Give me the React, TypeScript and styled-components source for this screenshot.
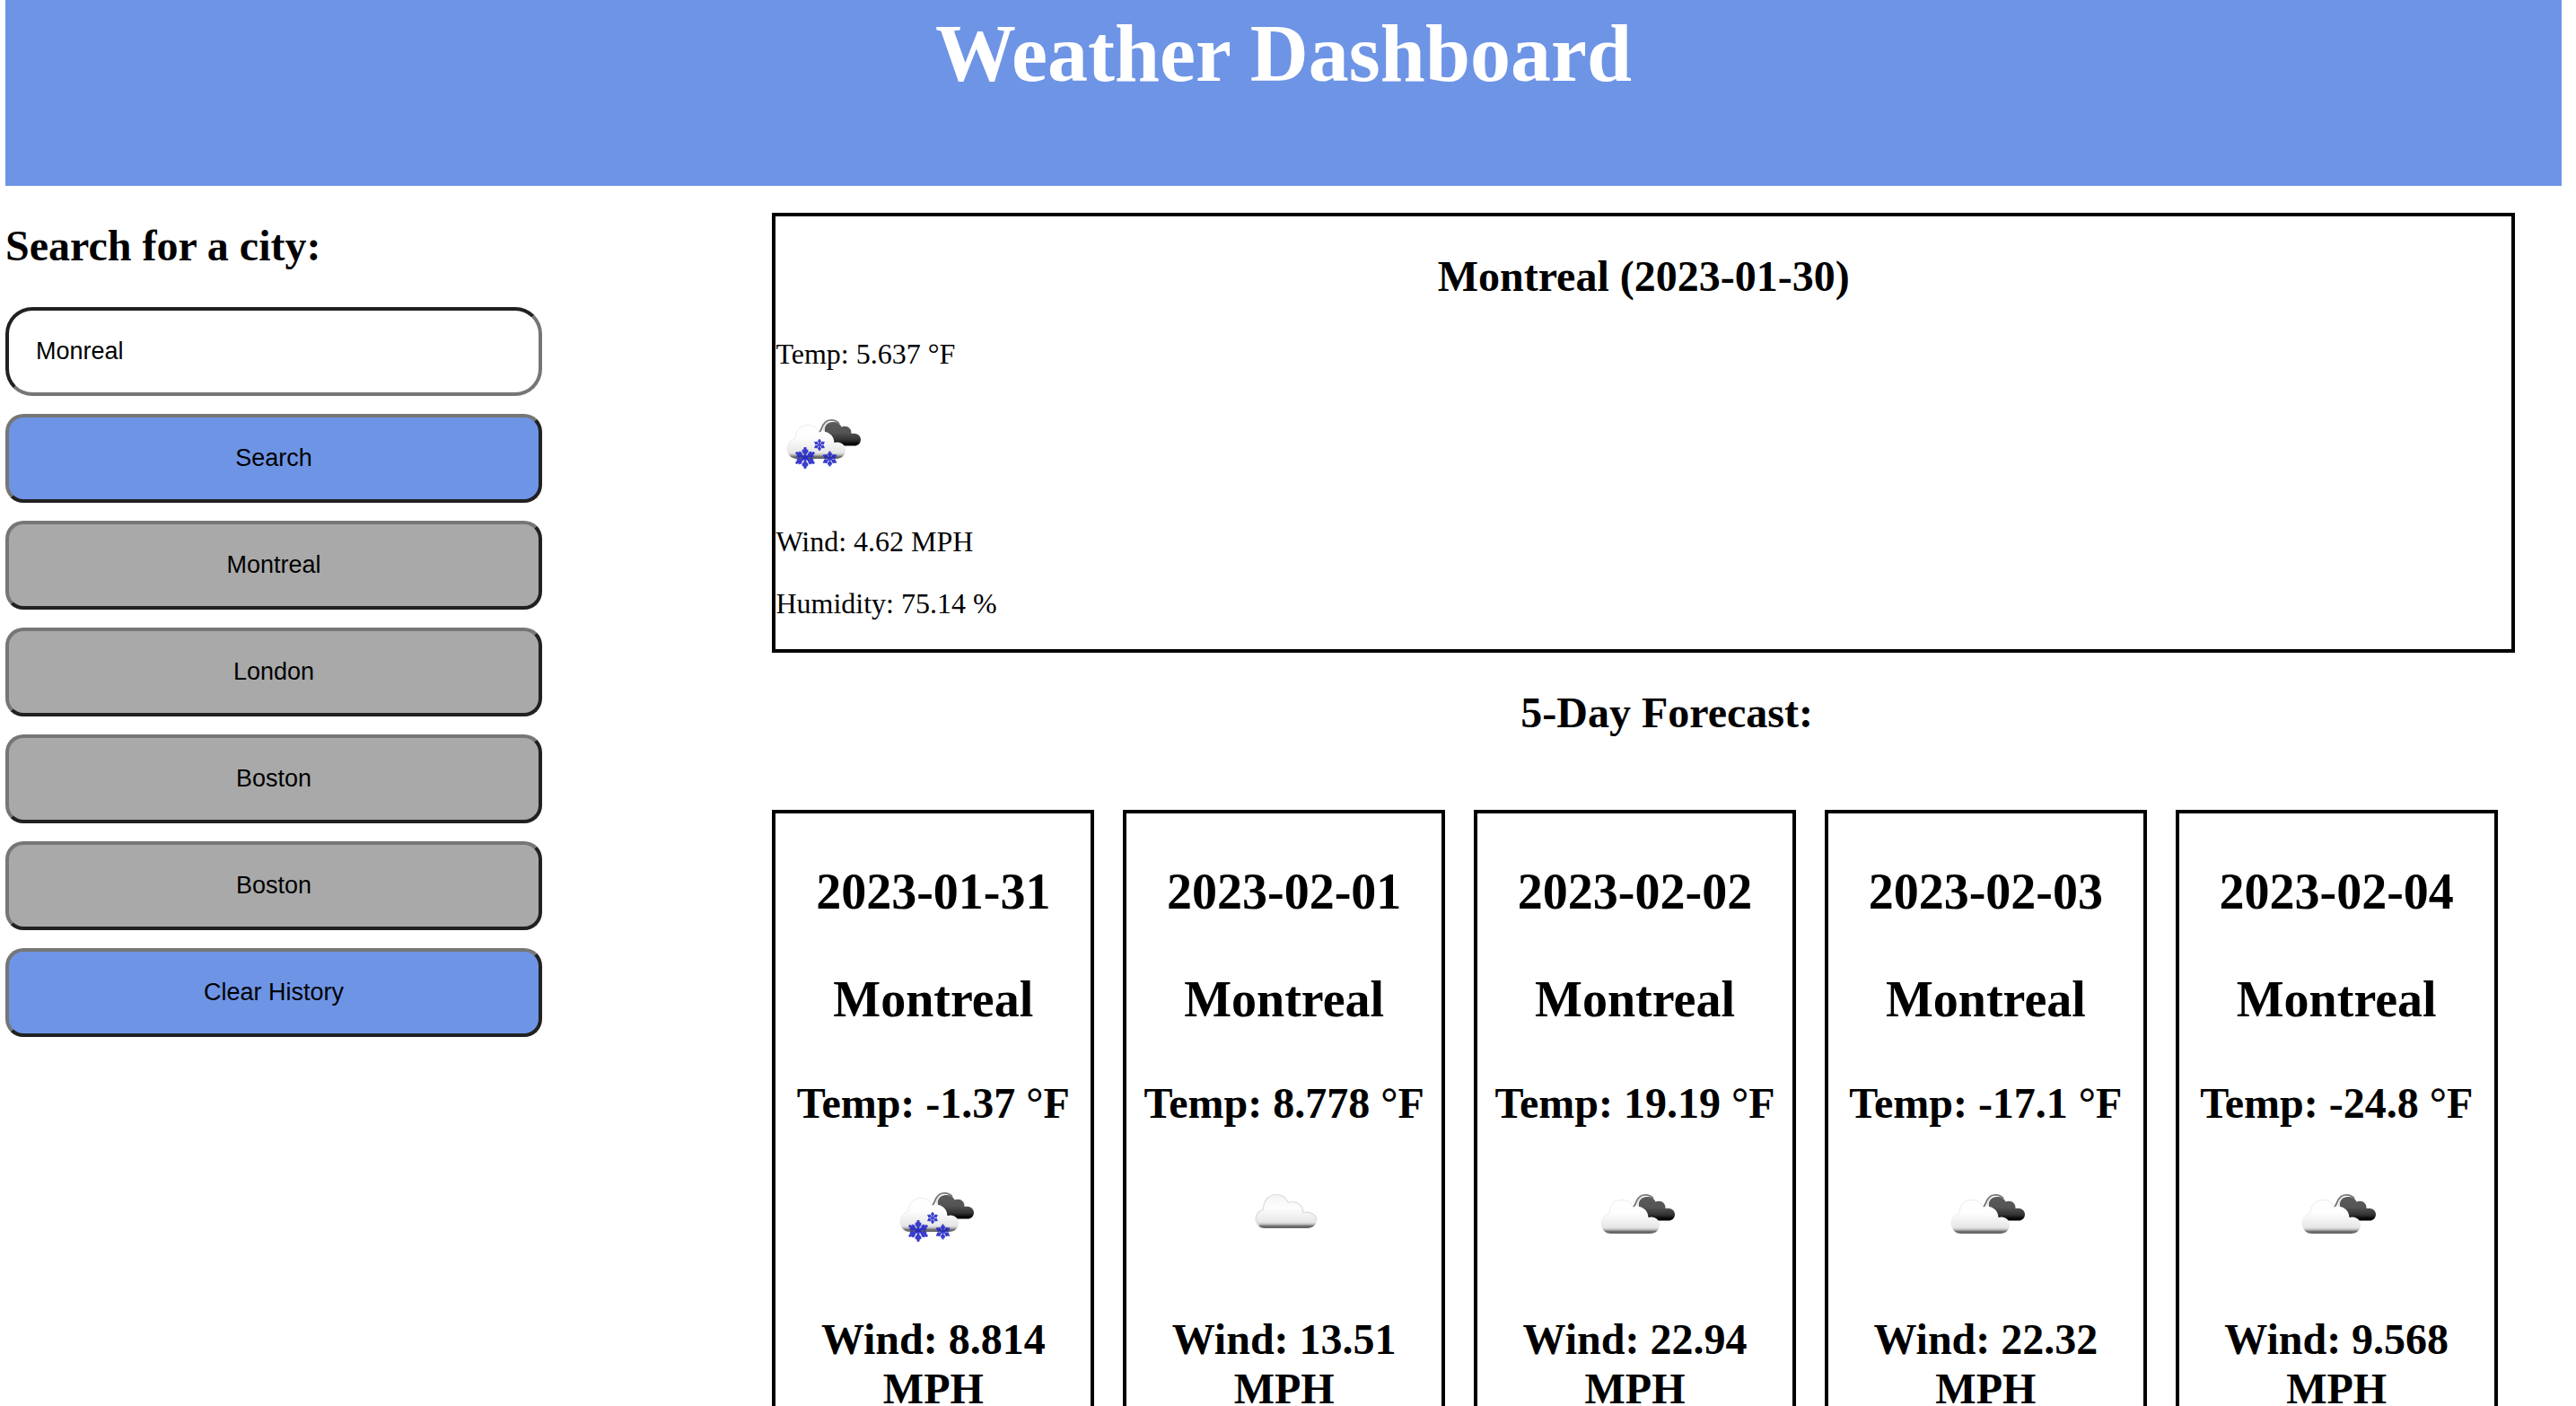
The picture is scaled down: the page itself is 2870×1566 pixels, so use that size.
import React, { useId, useState } from "react";
import styled, { createGlobalStyle } from "styled-components";

const GlobalStyle = createGlobalStyle`
  *, *::before, *::after { box-sizing: border-box; }
  html { scrollbar-width: none; }
  body {
    margin: 0 16px 0 6px;
    background: #fff;
    color: #000;
    font-family: "Liberation Serif", "Times New Roman", serif;
    font-size: 32px;
    line-height: 37px;
  }
`;

const Header = styled.header`
  padding: 8px 0 96px;
  background: #6e94e6;
  color: #fff;
  text-align: center;
`;

const Title = styled.h1`
  margin: 0;
  font-size: 90px;
  line-height: 103px;
`;

const Columns = styled.div`
  display: grid;
  grid-template-columns: 30% 70%;
  align-items: start;
`;

const Sidebar = styled.aside`
  width: 70%;
`;

const Heading = styled.h2<{ $center?: boolean }>`
  margin: 39px 0 41px;
  font-size: 48px;
  line-height: 55px;
  text-align: ${(p) => (p.$center ? "center" : "left")};
`;

const SearchForm = styled.form`
  display: flex;
  flex-direction: column;
  gap: 20px;
`;

const CityInput = styled.input`
  width: 100%;
  height: 99px;
  padding: 0 30px;
  border: 4px solid;
  border-color: #212121 #767676 #767676 #212121;
  border-radius: 30px;
  background: #fff;
  color: #000;
  font: 27px "Liberation Sans", Arial, sans-serif;
  outline: none;
`;

const CityButton = styled.button<{ $primary?: boolean }>`
  width: 100%;
  height: 99px;
  border: 4px solid;
  border-color: #767676 #212121 #212121 #767676;
  border-radius: 20px;
  background: ${(p) => (p.$primary ? "#6e94e6" : "#a9a9a9")};
  color: #000;
  font: 27px "Liberation Sans", Arial, sans-serif;
  cursor: pointer;
`;

const Main = styled.main`
  min-width: 0;
`;

const Current = styled.section`
  margin: 30px 52px 0 0;
  border: 4px solid #000;
`;

const Reading = styled.p`
  margin: 32px 0;
`;

const Icon = styled.svg`
  display: block;
  width: 100px;
  height: 100px;
`;

const IconRow = styled.div<{ $card?: boolean }>`
  display: flex;
  justify-content: ${(p) => (p.$card ? "center" : "flex-start")};
  padding: ${(p) => (p.$card ? "2px 0 10px" : "0 0 8px")};
`;

const Forecast = styled.div`
  display: flex;
  gap: 32px;
  padding-top: 40px;
`;

const Card = styled.article`
  width: 18%;
  border: 4px solid #000;
  text-align: center;
`;

const CardTitle = styled.h2`
  margin: 55px 0 56px;
  font-size: 56px;
  line-height: 64px;
`;

const CardReading = styled.h3`
  margin: 48px 0;
  font-size: 48px;
  line-height: 55px;
`;

type Sky = "snow" | "cloud" | "broken";

function Flake({ x, y, r }: { x: number; y: number; r: number }) {
  return (
    <g transform={`translate(${x} ${y}) scale(${r / 12})`} fill="#2226c8">
      {[0, 60, 120, 180, 240, 300].map((a) => (
        <path key={a} transform={`rotate(${a})`} d="M-1.300 0.500L-1.300 -4L-3.400 -6.500L-3.400 -9L-1.800 -9.500L-1.200 -12H1.200L1.800 -9.500L3.400 -9L3.400 -6.500L1.300 -4V0.500Z" />
      ))}
    </g>
  );
}

function WeatherIcon({ sky }: { sky: Sky }) {
  const id = useId();
  const light = `${id}-light`;
  const dark = `${id}-dark`;
  const soft = `${id}-soft`;
  return (
    <Icon viewBox="0 0 100 100" role="img" aria-label={sky} fill="none">
      <defs>
        <linearGradient id={light} x1="0" y1="0" x2="0" y2="1">
          <stop offset="0" stopColor={sky === "cloud" ? "#f4f4f4" : "#fff"} />
          <stop offset="0.4" stopColor="#fdfdfd" />
          <stop offset="0.82" stopColor="#e6e6e6" />
          <stop offset="0.88" stopColor="#c0c0c0" />
          <stop offset="0.93" stopColor="#747474" />
          <stop offset="1" stopColor="#606060" />
        </linearGradient>
        <linearGradient id={dark} x1="0" y1="0" x2="0" y2="1">
          <stop offset="0" stopColor="#5c5c5c" />
          <stop offset="0.45" stopColor="#545454" />
          <stop offset="0.75" stopColor="#333" />
          <stop offset="0.95" stopColor="#000" />
        </linearGradient>
        <filter id={soft} x="-10%" y="-10%" width="120%" height="120%">
          <feGaussianBlur stdDeviation="0.7" />
        </filter>
      </defs>
      {sky === "cloud" ? (
        <g filter={`url(#${soft})`}>
          <path
            d="M28 62C22 62 18 57 18 51.500C18 46 22 43 26.500 41C26.500 31 33 24.500 41 24.500C48 24.500 52 28 54.500 33.500C62 30.500 70 35 71 44.500C79 43 86 47 86 53C86 58 81 62 76 62Z"
            fill={`url(#${light})`}
          />
          <path
            d="M22 59C18.500 55 18 52 18 51.500C18 46 22 43 26.500 41C26.500 31 33 24.500 41 24.500C48 24.500 52 28 54.500 33.500C62 30.500 70 35 71 44.500C79 43 86 47 86 53"
            stroke="#dadada"
            strokeWidth="1.2"
          />
        </g>
      ) : (
        <g filter={`url(#${soft})`}>
          <g transform={sky === "snow" ? "translate(1 -2)" : undefined}>
            <path
              d="M54 38C53 31 57 27 62.500 27C68 27 71 29 72.500 32.500C78 30 84 33.500 83.500 40C89.500 38.500 94 42 94 46.500C94 51 90.500 53.500 87 53.500L62 53.500Z"
              fill={`url(#${dark})`}
            />
            <path d="M46.500 39C50 38 50 34 52 30.500C54 27 57 24.800 61 24.800C65 24.800 68 26 70 29" stroke="#777" strokeWidth="1.8" />
            <path d="M52.500 37C52.500 32 55 28 60 27" stroke="#dcdcdc" strokeWidth="1.2" />
            <path
              d="M23 68C16 68 12 63 12 57C12 51 16 47 21 45.500C21 36 27 30.500 35 30.500C41 30.500 45 33 47.500 38.500C56 36 64 41 64.500 50C71 48 77 52 77 58C77 64 72.500 68 66.500 68Z"
              fill={`url(#${light})`}
            />
            <path
              d="M14 62C12 60 12 58 12 57C12 51 16 47 21 45.500C21 36 27 30.500 35 30.500C41 30.500 45 33 47.500 38.500"
              stroke="#ebebeb"
            />
          </g>
          {sky === "snow" && (
            <g opacity="0.88">
              <Flake x={33} y={65} r={12} />
              <Flake x={49} y={50.5} r={6.5} />
              <Flake x={60.5} y={66} r={8.5} />
            </g>
          )}
        </g>
      )}
    </Icon>
  );
}

const days: { date: string; temp: string; wind: string; sky: Sky }[] = [
  { date: "2023-01-31", temp: "-1.37", wind: "8.814", sky: "snow" },
  { date: "2023-02-01", temp: "8.778", wind: "13.51", sky: "cloud" },
  { date: "2023-02-02", temp: "19.19", wind: "22.94", sky: "broken" },
  { date: "2023-02-03", temp: "-17.1", wind: "22.32", sky: "broken" },
  { date: "2023-02-04", temp: "-24.8", wind: "9.568", sky: "broken" },
];

const searches = ["Montreal", "London", "Boston", "Boston"];

export default function App() {
  const [city, setCity] = useState("Monreal");
  const [history, setHistory] = useState(searches);

  return (
    <>
      <GlobalStyle />
      <Header>
        <Title>Weather Dashboard</Title>
      </Header>
      <Columns>
        <Sidebar>
          <Heading>
            <label htmlFor="city">Search for a city:</label>
          </Heading>
          <SearchForm onSubmit={(e) => e.preventDefault()}>
            <CityInput id="city" type="text" value={city} onChange={(e) => setCity(e.target.value)} />
            <CityButton type="submit" $primary>
              Search
            </CityButton>
            {history.map((name, i) => (
              <CityButton key={i} type="button" onClick={() => setCity(name)}>
                {name}
              </CityButton>
            ))}
            <CityButton type="button" $primary onClick={() => setHistory([])}>
              Clear History
            </CityButton>
          </SearchForm>
        </Sidebar>
        <Main>
          <Current>
            <Heading $center>Montreal (2023-01-30)</Heading>
            <Reading>Temp: 5.637 °F</Reading>
            <IconRow>
              <WeatherIcon sky="snow" />
            </IconRow>
            <Reading>Wind: 4.62 MPH</Reading>
            <Reading>Humidity: 75.14 %</Reading>
          </Current>
          <Heading $center>5-Day Forecast:</Heading>
          <Forecast>
            {days.map((day) => (
              <Card key={day.date}>
                <CardTitle>{day.date}</CardTitle>
                <CardTitle>Montreal</CardTitle>
                <CardReading>Temp: {day.temp} °F</CardReading>
                <IconRow $card>
                  <WeatherIcon sky={day.sky} />
                </IconRow>
                <CardReading>Wind: {day.wind} MPH</CardReading>
              </Card>
            ))}
          </Forecast>
        </Main>
      </Columns>
    </>
  );
}
